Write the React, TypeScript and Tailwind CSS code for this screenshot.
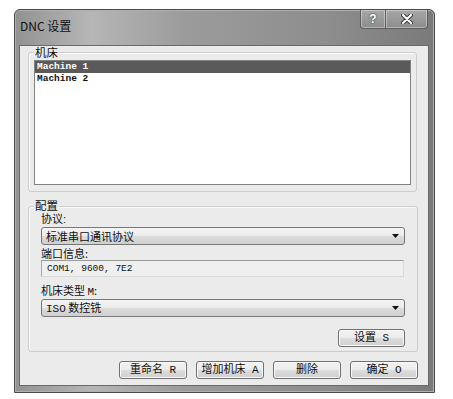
import React from 'react';

const cjk = { fontFamily: '"Noto Sans CJK SC", "Noto Sans", sans-serif' };
const tight = { fontFamily: '"Liberation Sans", "Noto Sans CJK SC", sans-serif' };
const mono = { fontFamily: '"Liberation Mono", "Noto Sans CJK SC", monospace' };

const Arrow = () => (
  <svg width="7" height="4" viewBox="0 0 7 4" className="ml-auto mr-[5px]">
    <path d="M0 0 H7 L3.5 4 Z" fill="#111" />
  </svg>
);

const Combo = ({ children }: { children: React.ReactNode }) => (
  <div className="flex items-center h-[18px] w-[364px] rounded-[3px] border border-[#777] bg-[linear-gradient(180deg,#f4f4f4_0%,#ebebeb_50%,#dcdcdc_51%,#cfcfcf_100%)] pl-[4px] text-[11px] leading-[16px] text-[#111]">
    <span className="whitespace-pre">{children}</span>
    <Arrow />
  </div>
);

const Button = ({ children, w = 'w-[68px]' }: { children: React.ReactNode; w?: string }) => (
  <div
    className={`${w} h-[18px] flex items-center justify-center rounded-[3px] border border-[#707070] bg-[linear-gradient(180deg,#f2f2f2_0%,#ebebeb_50%,#dddddd_51%,#cfcfcf_100%)] shadow-[inset_0_0_0_1px_#fafafa] text-[11px] leading-[16px] text-[#111] whitespace-pre`}
    style={mono}
  >
    {children}
  </div>
);

export default function App() {
  return (
    <div className="w-[453px] h-[399px] bg-white pl-[14px] pt-[9px]" style={cjk}>
      <div className="w-[421px] h-[384px] flex flex-col rounded-t-[6px] border border-[#4a4a4a] bg-[linear-gradient(90deg,#929292_0%,#b6b6b6_18%,#9c9c9c_40%,#8d8d8d_75%,#7a7a7a_100%)] shadow-[inset_0_0_0_1px_#b0b0b0]">
        {/* title bar */}
        <div className="h-[35px] flex items-start">
          <div className="pt-[8px] pl-[5px] text-[12px] leading-[16px] text-[#111]">DNC 设置</div>
          <div className="ml-auto mr-[6px] flex">
            <div className="w-[26px] h-[19px] flex items-center justify-center rounded-bl-[4px] border border-t-0 border-[#5e5e5e] bg-[linear-gradient(180deg,#a8a8a8,#8c8c8c)] shadow-[inset_0_0_0_1px_rgba(255,255,255,0.35)]">
              <span className="text-[12px] font-bold leading-none text-white [text-shadow:0_0_2px_#222]" style={{ fontFamily: '"Liberation Sans", sans-serif' }}>?</span>
            </div>
            <div className="w-[42px] h-[19px] flex items-center justify-center rounded-br-[4px] border border-t-0 border-l-0 border-[#5e5e5e] bg-[linear-gradient(180deg,#a8a8a8,#8c8c8c)] shadow-[inset_0_0_0_1px_rgba(255,255,255,0.35)]">
              <svg width="12" height="10" viewBox="0 0 12 10">
                <path d="M2 1 L10 9 M10 1 L2 9" stroke="#333" strokeWidth="4" strokeLinecap="round" />
                <path d="M2 1 L10 9 M10 1 L2 9" stroke="#fff" strokeWidth="2.2" strokeLinecap="round" />
              </svg>
            </div>
          </div>
        </div>

        {/* client */}
        <div className="ml-[4px] w-[410px] h-[341px] border border-[#6a6a6a] bg-[#ebebeb] flex flex-col">
          {/* 机床 group */}
          <div className="mt-[6px] ml-[8px] w-[389px] h-[140px] rounded-[3px] border border-[#cdcdcd] shadow-[inset_1px_1px_0_#fafafa] flex flex-col">
            <div className="-mt-[7px] ml-[5px] px-[1px] w-fit bg-[#ebebeb] text-[11.5px] leading-[13px] text-[#111]">机床</div>
            <div className="mt-[1px] ml-[5px] w-[377px] h-[125px] border border-[#828282] bg-white flex flex-col text-[9.5px] font-bold leading-[12px]" style={mono}>
              <div className="h-[12px] bg-[#5a5a5a] text-white pl-[2px]">Machine 1</div>
              <div className="h-[12px] text-[#111] pl-[2px]">Machine 2</div>
            </div>
          </div>

          {/* 配置 group */}
          <div className="mt-[14px] ml-[8px] w-[390px] h-[146px] rounded-[3px] border border-[#cdcdcd] shadow-[inset_1px_1px_0_#fafafa] flex flex-col pl-[12px]">
            <div className="-mt-[7px] -ml-[7px] px-[1px] w-fit bg-[#ebebeb] text-[11.5px] leading-[12px] text-[#111]" style={tight}>配置</div>
            <div className="mt-[1px] text-[11px] leading-[13px] text-[#111]" style={tight}>协议:</div>
            <div className="mt-[1px]">
              <Combo>标准串口通讯协议</Combo>
            </div>
            <div className="mt-[1px] text-[11px] leading-[14px] text-[#111]">端口信息:</div>
            <div className="w-[363px] h-[17px] border border-t-[#9a9a9a] border-l-[#aaaaaa] border-r-[#dadada] border-b-[#dadada] bg-[#efefef] pl-[5px] text-[9.5px] leading-[15px] text-[#111]" style={mono}>
              COM1, 9600, 7E2
            </div>
            <div className="mt-[6px] text-[11px] leading-[14px] text-[#111] whitespace-pre">
              机床类型 <span style={mono}>M</span>:
            </div>
            <div>
              <Combo>
                <span style={mono}>ISO</span> 数控铣
              </Combo>
            </div>
            <div className="mt-[12px] w-[364px] flex justify-end">
              <Button w="w-[67px]">设置 S</Button>
            </div>
          </div>

          {/* bottom buttons */}
          <div className="mt-[9px] mr-[10px] flex justify-end gap-[9px]">
            <Button>重命名 R</Button>
            <Button>增加机床 A</Button>
            <Button>删除</Button>
            <Button>确定 O</Button>
          </div>
        </div>
      </div>
    </div>
  );
}
